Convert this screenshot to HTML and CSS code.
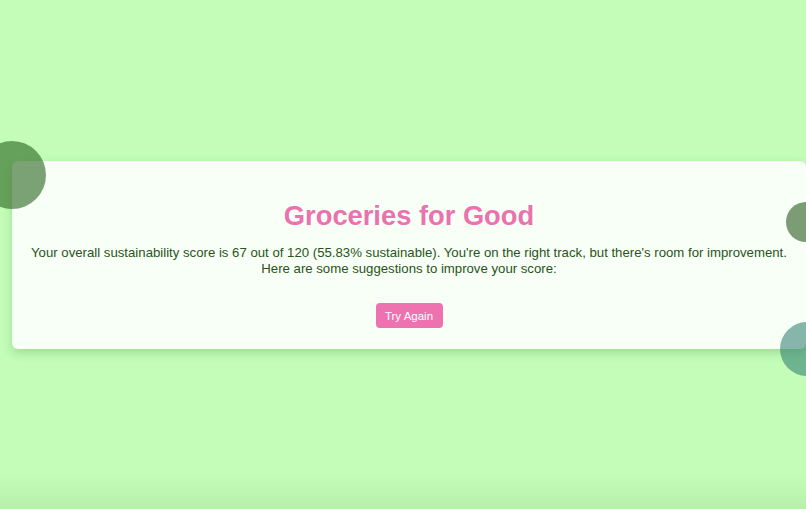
FILE: index.html
```html
<!DOCTYPE html>
<html>
<head>
<meta charset="utf-8">
<link rel="stylesheet" href="styles.css">
</head>
<body>
<div class="page">
  <div class="card">
    <h1 class="title">Groceries for Good</h1>
    <p class="summary">Your overall sustainability score is 67 out of 120 (55.83% sustainable). You're on the right track, but there's room for improvement. Here are some suggestions to improve your score:</p>
    <button class="btn">Try Again</button>
  </div>
  <span class="blob blob-a"></span>
  <span class="blob blob-b"></span>
  <span class="blob blob-c"></span>
</div>
</body>
</html>
```
FILE: styles.css
```css
html, body {
  margin: 0;
  padding: 0;
  height: 100%;
  overflow: hidden;
}
body {
  background: linear-gradient(to bottom, #c3fdb8 0%, #c3fdb8 93%, #b6f0ab 100%);
  font-family: "Liberation Sans", Arial, sans-serif;
}
.page {
  position: relative;
  height: 509px;
  padding-top: 161px;
  box-sizing: border-box;
}
.card {
  margin-left: 12px;
  width: 794px;
  box-sizing: border-box;
  background: #f8fff6;
  border-radius: 6px;
  box-shadow: 0 4px 10px rgba(60, 120, 50, 0.25);
  padding: 39px 10px 21px;
  text-align: center;
}
.title {
  margin: 0;
  color: #ea72ae;
  font-size: 27.3px;
  font-weight: bold;
  line-height: 32px;
}
.summary {
  margin: 13px 0 0;
  color: #28531a;
  font-size: 13.2px;
  line-height: 16px;
}
.btn {
  margin-top: 26px;
  background: #ef72b0;
  color: #fff;
  border: none;
  border-radius: 4px;
  font-family: "Liberation Sans", Arial, sans-serif;
  font-size: 11.5px;
  width: 67px;
  height: 25px;
  padding: 0;
  vertical-align: top;
}
.blob {
  position: absolute;
  border-radius: 50%;
}
.blob-a {
  left: -22px;
  top: 141px;
  width: 68px;
  height: 68px;
  background: rgba(40, 100, 30, 0.6);
}
.blob-b {
  left: 786px;
  top: 202px;
  width: 40px;
  height: 40px;
  background: rgba(40, 90, 30, 0.6);
}
.blob-c {
  left: 780px;
  top: 322px;
  width: 54px;
  height: 54px;
  background: rgba(40, 120, 110, 0.55);
}
```
